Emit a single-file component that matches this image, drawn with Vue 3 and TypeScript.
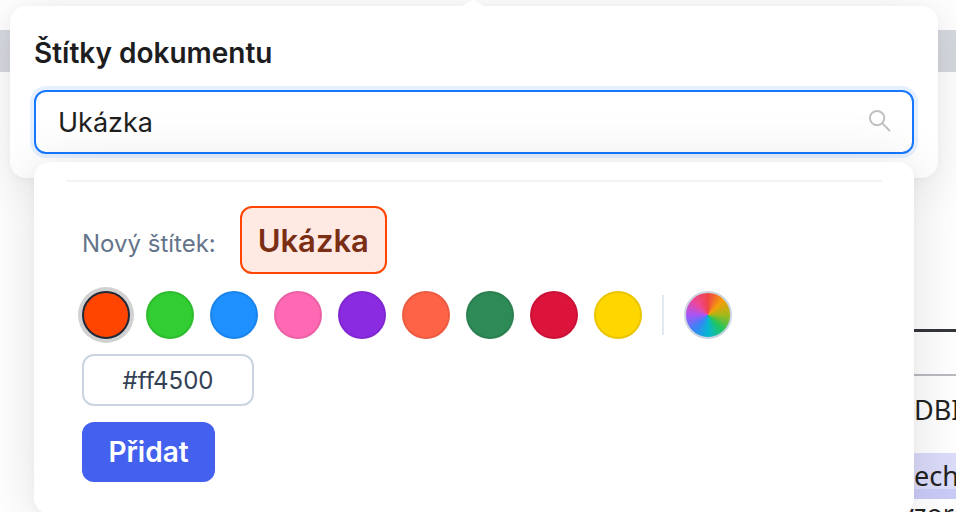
<script setup lang="ts">
const colors: string[] = ['#ff4500', '#32cd32', '#1e90ff', '#ff69b4', '#8a2be2', '#ff6347', '#2e8b57', '#dc143c', '#ffd700']
const selected = '#ff4500'
</script>

<template>
  <div class="page">
    <div class="backdrop">
      <div class="band"></div>
      <div class="doc">
        <div class="rule-dark"></div>
        <div class="rule-light"></div>
        <div class="doc-text">DBI</div>
        <div class="doc-mark">ech</div>
        <div class="doc-tail">vzore</div>
      </div>
    </div>

    <div class="overlay">
      <div class="arrow"></div>
      <section class="popover">
        <h2 class="title">Štítky dokumentu</h2>
        <div class="search">
          <span class="search-value">Ukázka</span>
          <svg class="search-icon" viewBox="0 0 24 24" fill="none" stroke="#bfbfbf" stroke-width="2" stroke-linecap="round">
            <circle cx="9.5" cy="9.5" r="7.5" />
            <path d="M15 15L22.5 22.5" />
          </svg>
        </div>
      </section>

      <section class="dropdown">
        <div class="divider"></div>
        <div class="preview-row">
          <span class="preview-label">Nový štítek:</span>
          <span class="badge">Ukázka</span>
        </div>
        <div class="swatches">
          <span
            v-for="c in colors"
            :key="c"
            class="swatch"
            :class="{ active: c === selected }"
            :style="{ backgroundColor: c }"
          ></span>
          <span class="sep"></span>
          <span class="rainbow"></span>
        </div>
        <div class="hex">#ff4500</div>
        <button class="add" type="button">Přidat</button>
      </section>
    </div>
  </div>
</template>

<style>
html, body { margin: 0; background: #fff; overflow: hidden; }
</style>

<style scoped>
.page {
  position: relative;
  width: 956px;
  height: 512px;
  overflow: hidden;
  background: #fff;
  font-family: Inter, "Noto Sans", sans-serif;
}
.backdrop { display: flex; flex-direction: column; padding-top: 30px; }
.band { height: 42px; background: #d6d9df; }
.doc { margin-left: 914px; padding-top: 257px; font-family: "Noto Sans", Inter, sans-serif; color: #222; font-size: 27px; white-space: nowrap; }
.rule-dark { height: 3px; background: #33363b; }
.rule-light { height: 2px; margin-top: 42px; background: #b9bbc0; }
.doc-text { margin-top: 16px; height: 61px; line-height: 36px; }
.doc-mark { height: 46px; background: linear-gradient(#dcdcfb 0 36px, #cbcbf8 36px); line-height: 46px; }
.doc-tail { line-height: 26px; margin: 2px 0 0 -14px; }

.overlay { position: absolute; inset: 0; }
.arrow {
  position: absolute;
  left: 461px;
  top: 0;
  width: 24px;
  height: 7px;
  background: #fff;
  clip-path: polygon(50% -10%, 100% 100%, 0 100%);
  z-index: 2;
}
.popover {
  position: absolute;
  left: 10px;
  top: 6px;
  width: 928px;
  height: 172px;
  box-sizing: border-box;
  padding: 31px 24px 0;
  background: #fff;
  border-radius: 16px;
  box-shadow: 0 6px 48px rgba(0, 0, 0, 0.11), 0 2px 8px rgba(0, 0, 0, 0.03);
}
.title {
  margin: 0;
  font-size: 28px;
  line-height: 32px;
  font-weight: 600;
  color: #1d1d1f;
}
.search {
  display: flex;
  align-items: center;
  justify-content: space-between;
  box-sizing: border-box;
  height: 64px;
  margin-top: 21px;
  padding: 1px 22px 0 22px;
  border: 2px solid #1677ff;
  border-radius: 12px;
  box-shadow: 0 0 0 4px #e6f0ff;
}
.search-value { font-size: 27px; line-height: 36px; color: #1f1f1f; }
.search-icon { width: 23px; height: 23px; margin: -4px -1px 0 0; }

.dropdown {
  position: absolute;
  left: 34px;
  top: 162px;
  width: 880px;
  height: 352px;
  box-sizing: border-box;
  padding: 18px 32px 0;
  background: #fff;
  border-radius: 16px;
  box-shadow: 0 6px 60px rgba(0, 0, 0, 0.12), 0 2px 8px rgba(0, 0, 0, 0.03);
}
.divider { height: 2px; background: #f1f3f6; }
.preview-row {
  display: flex;
  align-items: center;
  gap: 24px;
  margin-top: 24px;
  padding-left: 16px;
}
.preview-label { font-size: 24px; line-height: 28px; color: #64748b; padding-top: 7px; }
.badge {
  box-sizing: border-box;
  width: 147px;
  height: 68px;
  display: flex;
  align-items: center;
  justify-content: center;
  border: 2px solid #ff4500;
  border-radius: 12px;
  background: #fee9e3;
  color: #7a2e14;
  font-size: 31px;
  font-weight: 600;
}
.swatches {
  display: flex;
  align-items: center;
  gap: 16px;
  margin-top: 17px;
  padding-left: 16px;
}
.swatch {
  width: 48px;
  height: 48px;
  box-sizing: border-box;
  border-radius: 50%;
  border: 2px solid rgba(0, 0, 0, 0.08);
  flex: none;
}
.swatch.active {
  border-color: #1f2937;
  box-shadow: 0 0 0 4px #d1d1d1;
}
.sep {
  width: 2px;
  height: 40px;
  margin: 0 4px;
  background: #e2e8f0;
  flex: none;
}
.rainbow {
  width: 48px;
  height: 48px;
  box-sizing: border-box;
  border-radius: 50%;
  border: 2px solid #cbd5e1;
  background: conic-gradient(#ef4444, #f59e0b, #a3b818, #22c55e, #06b6d4, #3b82f6, #a855f7, #ec4899, #ef4444) border-box;
  flex: none;
}
.hex {
  box-sizing: border-box;
  width: 172px;
  height: 52px;
  margin: 15px 0 0 16px;
  display: flex;
  align-items: center;
  justify-content: center;
  border: 2px solid #cbd5e1;
  border-radius: 12px;
  font-size: 24px;
  color: #334155;
}
.add {
  display: block;
  width: 133px;
  height: 60px;
  margin: 16px 0 0 16px;
  padding: 0;
  border: 0;
  border-radius: 12px;
  background: #4361ee;
  color: #fff;
  font: 600 28px Inter, sans-serif;
}
</style>
